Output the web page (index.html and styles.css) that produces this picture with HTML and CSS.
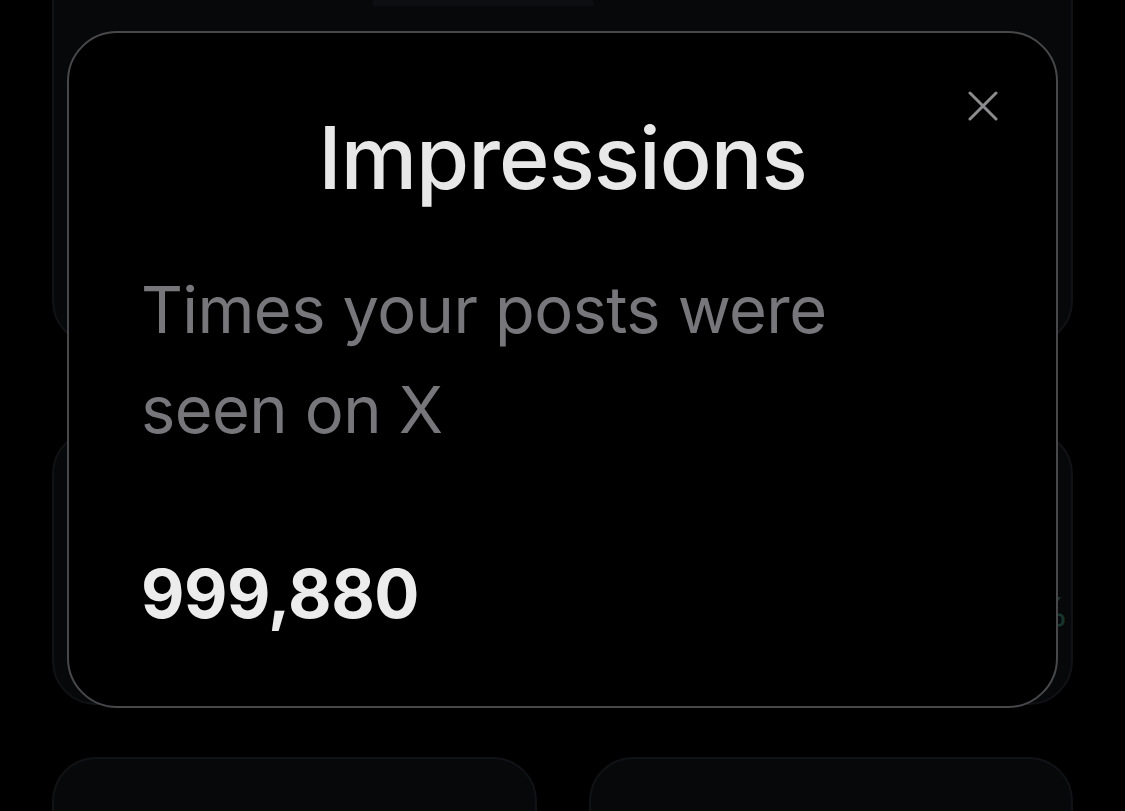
FILE: index.html
```html
<!DOCTYPE html>
<html lang="en">
<head>
<meta charset="utf-8">
<title>Impressions</title>
<link rel="stylesheet" href="styles.css">
</head>
<body>
<div class="page">
  <div class="card card-top">
    <div class="top-pill"></div>
  </div>
  <div class="card card-mid">
    <span class="pct">%</span>
  </div>
  <div class="row">
    <div class="card card-small"></div>
    <div class="card card-small"></div>
  </div>
</div>

<div class="modal" role="dialog" aria-labelledby="m-title">
  <button class="close" aria-label="Close">
    <svg viewBox="0 0 30 30" width="30" height="30"><path d="M2 2 L28 28 M28 2 L2 28" stroke="#8c8c8e" stroke-width="3" stroke-linecap="round" fill="none"/></svg>
  </button>
  <h1 id="m-title" class="title">Impressions</h1>
  <p class="desc">Times your posts were seen on X</p>
  <p class="value">999,880</p>
</div>
</body>
</html>
```

FILE: styles.css
```css
* { box-sizing: border-box; }
html, body {
  margin: 0;
  padding: 0;
  background: #000;
  height: 811px;
  overflow: hidden;
}
body {
  position: relative;
  font-family: Inter, "Noto Sans", "Liberation Sans", sans-serif;
}
.page {
  padding: 0 52px;
  display: flex;
  flex-direction: column;
}
.card {
  background: #07080a;
  border: 2px solid #111215;
  border-radius: 44px;
}
.card-top {
  margin-top: -60px;
  height: 405px;
  position: relative;
}
.top-pill {
  position: absolute;
  left: 318px;
  top: 58px;
  width: 222px;
  height: 6px;
  background: #0d0e11;
  border-radius: 3px;
}
.card-mid {
  margin-top: 85px;
  height: 275px;
  position: relative;
}
.pct {
  position: absolute;
  right: 2px;
  top: 160px;
  font-size: 40px;
  line-height: 1;
  color: #17342d;
}
.row {
  margin-top: 52px;
  display: grid;
  grid-template-columns: 1fr 1fr;
  gap: 52px;
}
.card-small {
  height: 54px;
  border-bottom: 0;
  border-radius: 44px 44px 0 0;
}
.modal {
  position: absolute;
  left: 67px;
  top: 31px;
  width: 991px;
  height: 677px;
  background: #000;
  border: 2.5px solid #48484b;
  border-radius: 50px;
  padding: 0 72px;
}
.close {
  position: absolute;
  right: 58px;
  top: 58px;
  width: 30px;
  height: 30px;
  padding: 0;
  border: 0;
  background: none;
  display: block;
}
.close svg { display: block; }
.title {
  margin: 74px 0 0;
  text-align: center;
  font-size: 86px;
  font-weight: 500;
  line-height: 1.2;
  color: #e8e8e8;
  letter-spacing: -1px;
}
.desc {
  margin: 50px 0 0;
  font-size: 65px;
  font-weight: 400;
  line-height: 100px;
  color: #77777b;
  max-width: 760px;
  letter-spacing: -0.6px;
}
.value {
  margin: 94px 0 0;
  font-size: 67px;
  font-weight: 700;
  line-height: 1.2;
  color: #ececec;
  letter-spacing: -0.5px;
}
```
